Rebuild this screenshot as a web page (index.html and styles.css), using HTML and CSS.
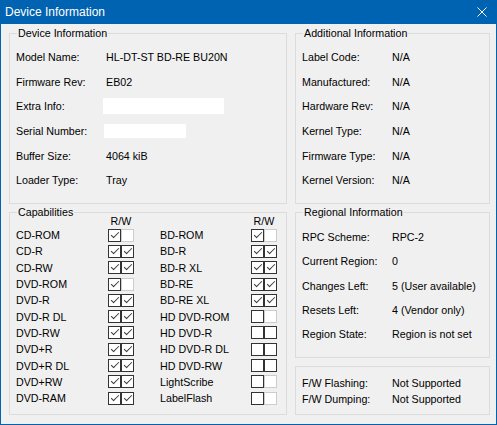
FILE: index.html
```html
<!DOCTYPE html>
<html lang="en">
<head>
    <meta charset="UTF-8">
    <meta name="viewport" content="width=device-width, initial-scale=1.0">
    <title>Device Information</title>
    <link rel="stylesheet" href="styles.css">
</head>
<body>
    <div class="window">
        <div class="titlebar">
            <span class="title">Device Information</span>
            <svg class="close" width="10" height="10" viewBox="0 0 10 10">
                <path d="M0.5 0.5 L9.5 9.5 M9.5 0.5 L0.5 9.5" stroke="#fff" stroke-width="1" fill="none"/>
            </svg>
        </div>

        <div class="client">
            <fieldset class="group">
                <legend>Device Information</legend>
                <div class="info">
                    <span>Model Name:</span><span>HL-DT-ST BD-RE BU20N</span>
                    <span>Firmware Rev:</span><span>EB02</span>
                    <span>Extra Info:</span><span><span class="blank extra"></span></span>
                    <span>Serial Number:</span><span><span class="blank serial"></span></span>
                    <span>Buffer Size:</span><span>4064 kiB</span>
                    <span>Loader Type:</span><span>Tray</span>
                </div>
            </fieldset>

            <fieldset class="group">
                <legend>Additional Information</legend>
                <div class="info">
                    <span>Label Code:</span><span>N/A</span>
                    <span>Manufactured:</span><span>N/A</span>
                    <span>Hardware Rev:</span><span>N/A</span>
                    <span>Kernel Type:</span><span>N/A</span>
                    <span>Firmware Type:</span><span>N/A</span>
                    <span>Kernel Version:</span><span>N/A</span>
                </div>
            </fieldset>

            <fieldset class="group caps-group">
                <legend>Capabilities</legend>
                <div class="caps">
                    <span></span><span class="rw">R/W</span><span></span><span class="rw">R/W</span>

                    <span>CD-ROM</span>
                    <span class="pair"><span class="cb on"></span><span class="cb off"></span></span>
                    <span>BD-ROM</span>
                    <span class="pair"><span class="cb on"></span><span class="cb off"></span></span>

                    <span>CD-R</span>
                    <span class="pair"><span class="cb on"></span><span class="cb on"></span></span>
                    <span>BD-R</span>
                    <span class="pair"><span class="cb on"></span><span class="cb on"></span></span>

                    <span>CD-RW</span>
                    <span class="pair"><span class="cb on"></span><span class="cb on"></span></span>
                    <span>BD-R XL</span>
                    <span class="pair"><span class="cb on"></span><span class="cb on"></span></span>

                    <span>DVD-ROM</span>
                    <span class="pair"><span class="cb on"></span><span class="cb off"></span></span>
                    <span>BD-RE</span>
                    <span class="pair"><span class="cb on"></span><span class="cb on"></span></span>

                    <span>DVD-R</span>
                    <span class="pair"><span class="cb on"></span><span class="cb on"></span></span>
                    <span>BD-RE XL</span>
                    <span class="pair"><span class="cb on"></span><span class="cb on"></span></span>

                    <span>DVD-R DL</span>
                    <span class="pair"><span class="cb on"></span><span class="cb on"></span></span>
                    <span>HD DVD-ROM</span>
                    <span class="pair"><span class="cb"></span><span class="cb off"></span></span>

                    <span>DVD-RW</span>
                    <span class="pair"><span class="cb on"></span><span class="cb on"></span></span>
                    <span>HD DVD-R</span>
                    <span class="pair"><span class="cb"></span><span class="cb"></span></span>

                    <span>DVD+R</span>
                    <span class="pair"><span class="cb on"></span><span class="cb on"></span></span>
                    <span>HD DVD-R DL</span>
                    <span class="pair"><span class="cb"></span><span class="cb"></span></span>

                    <span>DVD+R DL</span>
                    <span class="pair"><span class="cb on"></span><span class="cb on"></span></span>
                    <span>HD DVD-RW</span>
                    <span class="pair"><span class="cb"></span><span class="cb"></span></span>

                    <span>DVD+RW</span>
                    <span class="pair"><span class="cb on"></span><span class="cb on"></span></span>
                    <span>LightScribe</span>
                    <span class="pair"><span class="cb"></span><span class="cb off"></span></span>

                    <span>DVD-RAM</span>
                    <span class="pair"><span class="cb on"></span><span class="cb on"></span></span>
                    <span>LabelFlash</span>
                    <span class="pair"><span class="cb"></span><span class="cb off"></span></span>
                </div>
            </fieldset>

            <div class="side">
                <fieldset class="group regional">
                    <legend>Regional Information</legend>
                    <div class="info regional-info">
                        <span>RPC Scheme:</span><span>RPC-2</span>
                        <span>Current Region:</span><span>0</span>
                        <span>Changes Left:</span><span>5 (User available)</span>
                        <span>Resets Left:</span><span>4 (Vendor only)</span>
                        <span>Region State:</span><span>Region is not set</span>
                    </div>
                </fieldset>

                <fieldset class="group firmware">
                    <div class="info firmware-info">
                        <span>F/W Flashing:</span><span>Not Supported</span>
                        <span>F/W Dumping:</span><span>Not Supported</span>
                    </div>
                </fieldset>
            </div>
        </div>
    </div>
</body>
</html>
```

FILE: styles.css
```css
body {
    margin: 0;
    font-family: "Liberation Sans", Arial, sans-serif;
    font-size: 10.7px;
    color: #000;
    background: #f0f0f0;
}

.window {
    width: 497px;
    height: 425px;
    box-sizing: border-box;
    border: 1px solid #0063b1;
    border-top: none;
    display: flex;
    flex-direction: column;
    background: #f0f0f0;
}

.titlebar {
    height: 24px;
    flex: none;
    background: #0063b1;
    color: #fff;
    font-size: 12px;
    display: flex;
    align-items: center;
    justify-content: space-between;
    padding: 0 9px 0 4px;
}

.close {
    display: block;
}

.client {
    flex: 1;
    display: grid;
    grid-template-columns: 278px 195px;
    grid-template-rows: 178px 1fr;
    column-gap: 8px;
    row-gap: 1px;
    padding: 2px 7px 9px 8px;
}

/* group boxes */
.group {
    margin: 0;
    padding: 5px 6px 0;
    border: 1px solid #dcdcdc;
    min-width: 0;
}

.group legend {
    padding: 0 1px;
    margin-left: 1px;
    line-height: 14px;
}

.info {
    display: grid;
    grid-template-columns: 90px 1fr;
    grid-auto-rows: 24.6px;
    align-items: center;
    white-space: nowrap;
}

.blank {
    display: inline-block;
    vertical-align: middle;
    background: #fff;
}

.blank.extra {
    width: 121px;
    height: 16px;
    margin-left: -3px;
}

.blank.serial {
    width: 82px;
    height: 14px;
    margin-left: -2px;
}

/* capabilities */
.caps-group {
    padding-top: 0;
}

.caps {
    display: grid;
    grid-template-columns: 92px 52px 91px 26px;
    grid-template-rows: 12px;
    grid-auto-rows: 16.3px;
    align-items: center;
    margin-top: -4px;
    white-space: nowrap;
}

.rw {
    width: 26px;
    text-align: center;
}

.pair {
    display: flex;
}

.cb {
    position: relative;
    width: 13px;
    height: 13px;
    box-sizing: border-box;
    border: 1px solid #333;
    background: #fff;
}

.cb.off {
    border-color: #cccccc;
}

.cb.on::after {
    content: "";
    position: absolute;
    left: 4px;
    top: 0;
    width: 3px;
    height: 7px;
    border-right: 1px solid #3a3a3a;
    border-bottom: 1px solid #3a3a3a;
    transform: rotate(45deg);
}

/* right column */
.side {
    display: flex;
    flex-direction: column;
    gap: 8px;
}

.regional {
    flex: 1;
    padding-top: 6px;
}

.regional-info {
    grid-auto-rows: 24.3px;
}

.firmware {
    flex: none;
    height: 49px;
    box-sizing: border-box;
    padding-top: 8px;
}

.firmware-info {
    grid-auto-rows: 16px;
}
```
